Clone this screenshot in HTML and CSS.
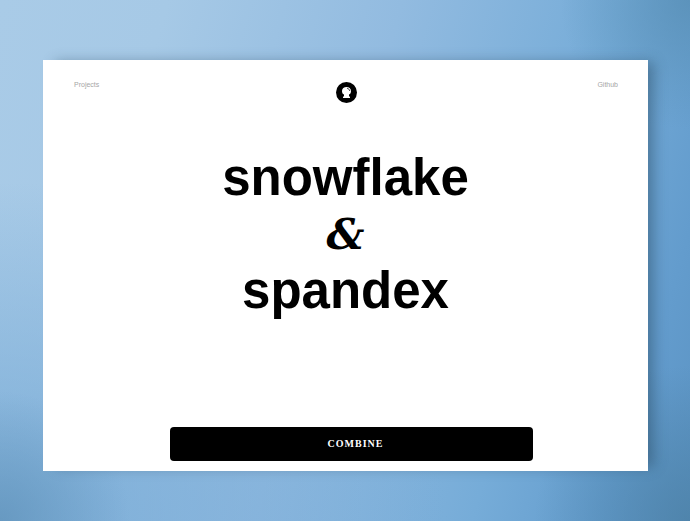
FILE: index.html
```html
<!DOCTYPE html>
<html lang="en">
<head>
  <meta charset="utf-8">
  <meta name="viewport" content="width=device-width, initial-scale=1">
  <title>snowflake &amp; spandex</title>
  <link rel="stylesheet" href="styles.css">
</head>
<body>
  <div class="window">
    <header class="nav">
      <a class="nav-link" href="#projects">Projects</a>
      <a class="logo" href="#home" aria-label="Home">
        <svg viewBox="0 0 42 42" aria-hidden="true">
          <circle cx="21" cy="21" r="21" fill="#000"/>
          <path d="M14 32v-3h2v-4c-3-1-4-4-4-7 0-5 4-8 9-8s9 3 9 8c0 3-1 6-4 7v4h2v3z" fill="#fff"/>
          <path d="M22 12.5c3 .5 5 2.500 5.500 5.500" fill="none" stroke="#000" stroke-width="1.400"/>
        </svg>
      </a>
      <a class="nav-link nav-link-end" href="#github">Github</a>
    </header>
    <main class="main">
      <h1 class="pair">
        <span class="word">snowflake</span>
        <span class="amp">&amp;</span>
        <span class="word">spandex</span>
      </h1>
      <button class="combine" type="button">COMBINE</button>
    </main>
  </div>
</body>
</html>
```
FILE: styles.css
```css
* {
  box-sizing: border-box;
}

body {
  display: flex;
  min-height: 100vh;
  margin: 0;
  padding: 60px 42px 50px 43px;
  font-family: "Liberation Sans", Arial, sans-serif;
  color: #000;
  background:
    radial-gradient(circle at 100% 0, rgba(85, 140, 178, 0.7), rgba(85, 140, 178, 0) 15%),
    radial-gradient(circle at 100% 100%, rgba(74, 126, 162, 0.7), rgba(74, 126, 162, 0) 18%),
    radial-gradient(circle at 0 100%, rgba(95, 145, 184, 0.7), rgba(95, 145, 184, 0) 15%),
    radial-gradient(ellipse at 0 100%, rgba(112, 166, 212, 0.8), rgba(112, 166, 212, 0) 46%),
    linear-gradient(106deg, #a9cbe7 0%, #a6c9e6 20%, #92bbe0 48%, #76acd8 74%, #639ccd 90%, #5b93c3 100%);
}

.window {
  display: flex;
  flex: 1;
  flex-direction: column;
  background: #fff;
  box-shadow: 9px -1px 12px -3px rgba(40, 70, 95, 0.45);
}

.nav {
  display: grid;
  grid-template-columns: 1fr auto 1fr;
  align-items: start;
  padding: 22px 30px 0 31px;
}

.nav-link {
  font-size: 7px;
  line-height: 6px;
  color: #a6a6a6;
  text-decoration: none;
}

.nav-link-end {
  text-align: right;
}

.logo svg {
  display: block;
  width: 21px;
  height: 21px;
}

.main {
  display: flex;
  flex: 1;
  flex-direction: column;
  justify-content: space-between;
  padding: 44px 0 10px;
}

.pair {
  display: flex;
  flex-direction: column;
  align-items: center;
  margin: 0;
  font-size: 51px;
}

.word {
  line-height: 62px;
}

.amp {
  font-family: "DejaVu Serif", serif;
  font-size: 42px;
  font-style: italic;
  line-height: 51px;
}

.combine {
  width: 60%;
  height: 34px;
  margin-left: 21%;
  padding: 0 0 0 8px;
  border: 0;
  border-radius: 4px;
  font: bold 10px/12px "Liberation Serif", "Times New Roman", serif;
  letter-spacing: 1px;
  color: #fff;
  background: #000;
}
```
